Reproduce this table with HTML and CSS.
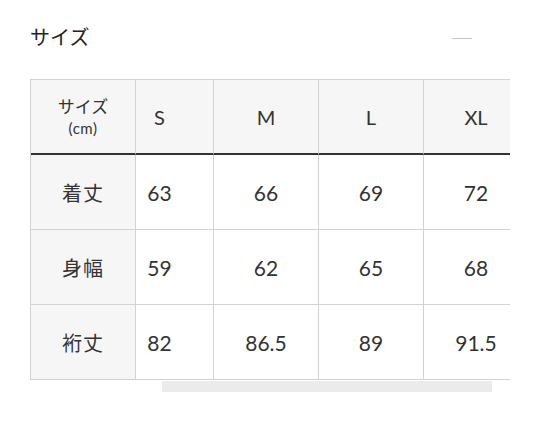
FILE: index.html
```html
<!DOCTYPE html>
<html lang="ja">
<head>
<meta charset="utf-8">
<link rel="stylesheet" href="styles.css">
</head>
<body>
<section class="size-section">
  <div class="section-head">
    <h2 class="section-title">サイズ</h2>
    <span class="toggle" aria-label="閉じる"></span>
  </div>
  <div class="table-wrap">
    <div class="size-grid">
      <div class="cell head label"><span class="jp-head">サイズ</span><span class="unit">(cm)</span></div>
      <div class="cell head first">S</div>
      <div class="cell head">M</div>
      <div class="cell head">L</div>
      <div class="cell head">XL</div>

      <div class="cell label jp">着丈</div>
      <div class="cell first">63</div>
      <div class="cell">66</div>
      <div class="cell">69</div>
      <div class="cell">72</div>

      <div class="cell label jp">身幅</div>
      <div class="cell first">59</div>
      <div class="cell">62</div>
      <div class="cell">65</div>
      <div class="cell">68</div>

      <div class="cell label jp">裄丈</div>
      <div class="cell first">82</div>
      <div class="cell">86.5</div>
      <div class="cell">89</div>
      <div class="cell">91.5</div>
    </div>
  </div>
  <div class="scroll-thumb"></div>
</section>
</body>
</html>
```
FILE: styles.css
```css
* { box-sizing: border-box; }
html, body {
  margin: 0;
  padding: 0;
  background: #fff;
}
body {
  font-family: "Lato", "Noto Sans CJK JP", sans-serif;
  color: #333;
  width: 540px;
}
.size-section {
  padding: 22px 30px 0 30px;
}
.section-head {
  display: flex;
  align-items: center;
  justify-content: space-between;
  height: 30px;
}
.section-title {
  margin: 0;
  font-family: "Noto Sans CJK JP", sans-serif;
  font-weight: 400;
  font-size: 20px;
  line-height: 30px;
  color: #222;
}
.toggle {
  display: block;
  width: 20px;
  height: 1px;
  background: #c4c4c4;
  margin-right: 38px;
  margin-top: 2px;
}
.table-wrap {
  margin-top: 27px;
  width: 480px;
  overflow: hidden;
  border-top: 1px solid #d2d2d2;
  border-left: 1px solid #d2d2d2;
}
.size-grid {
  display: grid;
  grid-template-columns: 105px 78px 105px 105px 105px;
  grid-auto-rows: 75px;
  width: 498px;
}
.cell {
  display: flex;
  flex-direction: column;
  align-items: center;
  justify-content: center;
  border-right: 1px solid #d2d2d2;
  border-bottom: 1px solid #d2d2d2;
  font-size: 21px;
  color: #333;
  background: #fff;
}
.cell.head {
  background: #f6f6f6;
  border-bottom: 2px solid #333;
  font-size: 20px;
}
.cell.first {
  padding-right: 30px;
}
.cell.label {
  background: #f6f6f6;
}
.cell.jp {
  font-family: "Noto Sans CJK JP", sans-serif;
  font-size: 20px;
  letter-spacing: 1px;
}
.jp-head {
  display: block;
  font-family: "Noto Sans CJK JP", sans-serif;
  font-size: 17px;
  line-height: 22px;
}
.unit {
  display: block;
  font-size: 15px;
  line-height: 22px;
  letter-spacing: 0.5px;
}
.scroll-thumb {
  margin-top: 1px;
  margin-left: 132px;
  width: 330px;
  height: 11px;
  background: #ebebeb;
}
```
